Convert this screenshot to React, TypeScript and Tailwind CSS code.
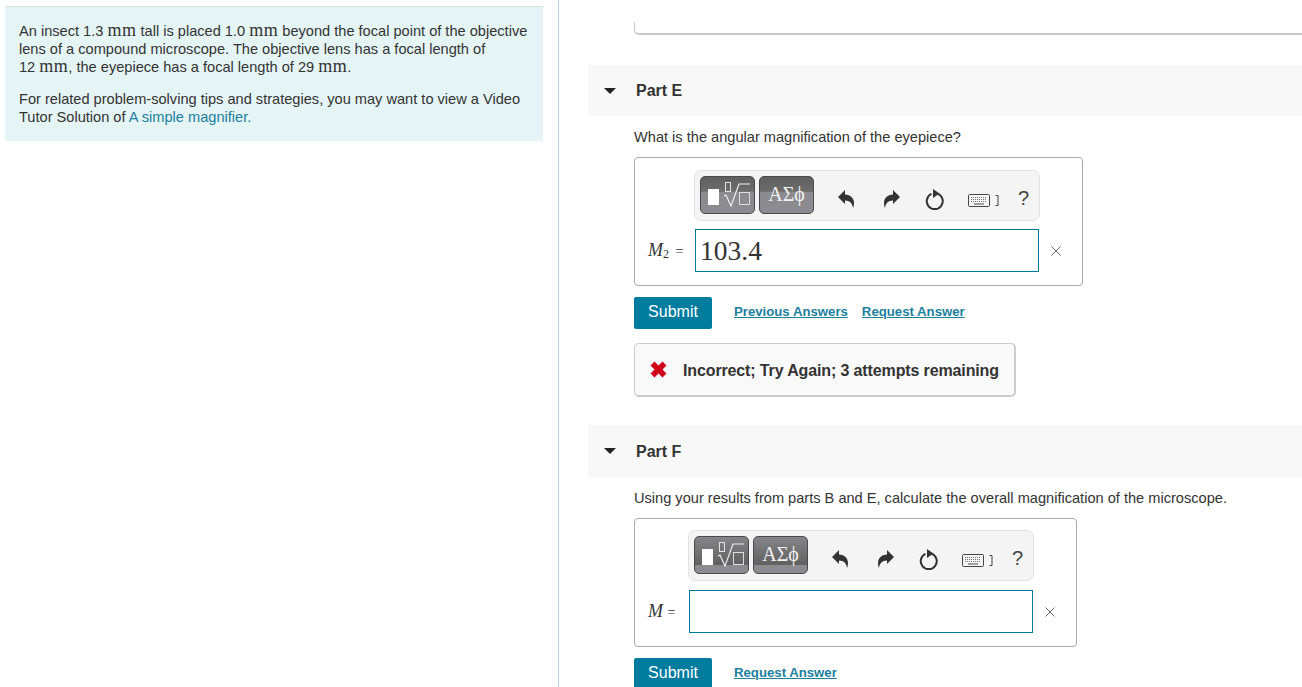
import type { ReactNode } from 'react';

const serif = { fontFamily: '"Liberation Serif", serif' };

function Mm() {
  return <span className="font-['Liberation_Serif',serif] text-[18px] leading-[17px] tracking-[0.5px]">mm</span>;
}

function TemplatesIcon() {
  return (
    <svg width="54" height="38" viewBox="0 0 54 38" fill="none" className="absolute inset-0">
      <rect x="7" y="12" width="11" height="16" fill="#fff" />
      <rect x="24.500" y="5.500" width="5" height="9" stroke="#e4e4e4" strokeWidth="1" />
      <path d="M23 19l2-1 5 11 8-22h11" stroke="#eee" strokeWidth="1.200" />
      <rect x="38.500" y="15.500" width="10" height="12" stroke="#ddd" strokeWidth="1" />
    </svg>
  );
}

function ToolButton({ stripe, children }: { stripe: string; children: ReactNode }) {
  return (
    <div className={`relative w-[55px] h-[38px] rounded-[5px] border border-[#4a4a4a] overflow-hidden ${stripe}`}>
      {children}
    </div>
  );
}

function Toolbar({ className, stripe }: { className: string; stripe: string }) {
  return (
    <div className={`flex items-center h-[51px] w-[346px] rounded-[7px] border border-[#e2e2e2] bg-[#f4f4f4] ${className}`}>
      <div className="flex gap-[4px] ml-[5px] -mt-[2px]">
        <ToolButton stripe={stripe}>
          <TemplatesIcon />
        </ToolButton>
        <ToolButton stripe={stripe}>
          <div className="text-center text-[#f2f2f2] text-[20px] leading-[34px]" style={serif}>ΑΣϕ</div>
        </ToolButton>
      </div>
      <svg width="16" height="18" viewBox="0 0 16 18" className="ml-[24px] mt-[7px]" fill="#333">
        <path d="M0 7 7 0v4.500c5 0 9 3.500 9 8.500 0 2-.5 4-1 5-.5-4.500-3-7.500-8-7.500V14z" />
      </svg>
      <svg width="16" height="18" viewBox="0 0 16 18" className="ml-[30px] mt-[7px]" fill="#333">
        <path d="M16 7 9 0v4.500c-5 0-9 3.500-9 8.500 0 2 .5 4 1 5 .5-4.500 3-7.500 8-7.500V14z" />
      </svg>
      <svg width="20" height="22" viewBox="0 0 20 22" className="ml-[25px] mt-[8px]" fill="none">
        <path d="M13 4.800a8 8 0 1 1-6.500 0" stroke="#333" strokeWidth="2" />
        <path d="M8 0l6.500 4.500L8 9z" fill="#333" />
      </svg>
      <svg width="22" height="13" viewBox="0 0 22 13" className="ml-[23px] mt-[10px]" fill="none">
        <rect x=".5" y=".5" width="21" height="12" rx="1" fill="#f4f4f4" stroke="#444" />
        <path d="M3 3.500h16M3 5.500h16M3 7.500h16" stroke="#777" strokeWidth="1.200" strokeDasharray="1 1" />
        <path d="M6 10h10" stroke="#666" strokeWidth="1.200" />
      </svg>
      <svg width="4" height="11" viewBox="0 0 4 11" className="ml-[5px] mt-[10px]" fill="none">
        <path d="M.5.500h2.500v10H.500" stroke="#444" />
      </svg>
      <span className="ml-[19px] mt-[4px] text-[#444] text-[20px] leading-[24px]">?</span>
    </div>
  );
}

function Answer({
  box,
  toolbar,
  stripe,
  labelWidth,
  label,
  children,
}: {
  box: string;
  toolbar: string;
  stripe: string;
  labelWidth: string;
  label: ReactNode;
  children?: ReactNode;
}) {
  return (
    <div className={`h-[129px] rounded-[4px] border border-[#aaa] ${box}`}>
      <Toolbar className={toolbar} stripe={stripe} />
      <div className="flex items-center">
        <div className={`text-[#333] text-[18px] pl-[13px] whitespace-nowrap ${labelWidth}`} style={serif}>
          {label}
        </div>
        <div className="h-[43px] w-[344px] border border-[#00799a] pl-[4px] text-[#333] text-[27.500px] leading-[41px]" style={serif}>
          {children}
        </div>
        <svg width="10" height="10" viewBox="0 0 10 10" className="ml-[12px]" fill="none">
          <path d="M.5.500l9 9M9.500.500l-9 9" stroke="#666" />
        </svg>
      </div>
    </div>
  );
}

function PartHeader({ name, height, labelClass }: { name: string; height: string; labelClass?: string }) {
  return (
    <div className={`flex items-center bg-[#f8f8f8] pl-[16px] ${height}`}>
      <div className="w-0 h-0 border-x-[6px] border-x-transparent border-t-[6px] border-t-[#222]" />
      <span className={`ml-[20px] text-[16px] font-bold text-[#333] ${labelClass ?? ''}`}>{name}</span>
    </div>
  );
}

function SubmitRow({ links }: { links: string[] }) {
  return (
    <div className="flex items-center">
      <div className="w-[78px] h-[32px] shrink-0 rounded-[2px] bg-[#007c9e] text-white text-[16px] leading-[30px] text-center">
        Submit
      </div>
      <div className="flex gap-[14px] ml-[22px] -mt-[2px]">
        {links.map((l) => (
          <span key={l} className="text-[13.200px] font-bold text-[#1b7f9e] underline">
            {l}
          </span>
        ))}
      </div>
    </div>
  );
}

export default function App() {
  return (
    <div className="flex h-[687px] overflow-hidden bg-white font-['Liberation_Sans',sans-serif] text-[14.600px] text-[#333]">
      <div className="w-[559px] shrink-0 border-r border-[#b9d0e4] pt-[6px] pl-[5px]">
        <div className="w-[538px] h-[135px] bg-[#e5f5f6] border-t border-[#d9e5e9] pt-[15px] pl-[14px] leading-[18px]">
          <p className="w-[515px]">
            An insect 1.3 <Mm /> tall is placed 1.0 <Mm /> beyond the focal point of the objective lens of a compound microscope. The objective lens has a focal length of
            <br />
            12 <Mm />, the eyepiece has a focal length of 29 <Mm />.
          </p>
          <p className="mt-[14px] w-[515px]">
            For related problem-solving tips and strategies, you may want to view a Video Tutor Solution of{' '}
            <span className="text-[#1b7f9e]">A simple magnifier.</span>
          </p>
        </div>
      </div>

      <div className="flex-1 pl-[29px] pt-[22px]">
        <div className="ml-[46px] h-[13px] border-b-2 border-l border-[#c9c9c9] rounded-bl-[5px]" />

        <div className="mt-[30px]">
          <PartHeader name="Part E" height="h-[51px]" />
        </div>
        <div className="pl-[46px]">
          <p className="mt-[12px] leading-[18px]">What is the angular magnification of the eyepiece?</p>
          <Answer
            box="mt-[11px] w-[449px] pt-[12px]"
            toolbar="ml-[59px] mb-[8px]"
            stripe="bg-[linear-gradient(#5f5f5f_0%,#6d6d6d_40%,#8b8b90_41%,#8b8b90_100%)]"
            labelWidth="w-[60px]"
            label={
              <>
                <i>M</i>
                <span className="text-[12px] align-[-2px]">2</span> <span className="ml-[2px] text-[14px]">=</span>
              </>
            }
          >
            103.4
          </Answer>
          <div className="mt-[11px]">
            <SubmitRow links={['Previous Answers', 'Request Answer']} />
          </div>
          <div className="mt-[14px] flex items-center w-[382px] h-[54px] rounded-[5px] border border-[#ccc] border-b-2 border-r-2 bg-[#f9f9f9] pl-[15px]">
            <svg width="17" height="17" viewBox="0 0 17 17" fill="#d0021b">
              <path d="M4.500 .5 8.500 4.500 12.500 .5 16.500 4.500 12.500 8.500 16.500 12.500 12.500 16.500 8.500 12.500 4.500 16.500 .5 12.500 4.500 8.500 .5 4.500z" />
            </svg>
            <span className="ml-[16px] mt-[2px] text-[16px] font-bold text-[#333] tracking-[-0.008em]">Incorrect; Try Again; 3 attempts remaining</span>
          </div>
        </div>

        <div className="mt-[28px]">
          <PartHeader name="Part F" height="h-[52px]" labelClass="mt-[2px]" />
        </div>
        <div className="pl-[46px]">
          <p className="mt-[12px] leading-[18px]">Using your results from parts B and E, calculate the overall magnification of the microscope.</p>
          <Answer
            box="mt-[11px] w-[443px] pt-[11px]"
            toolbar="ml-[53px] mb-[9px]"
            stripe="bg-[linear-gradient(#858589_0%,#606060_78%,#8b8b90_79%,#8b8b90_100%)]"
            labelWidth="w-[54px]"
            label={
              <>
                <i>M</i> <span className="text-[14px]">=</span>
              </>
            }
          />
          <div className="mt-[11px]">
            <SubmitRow links={['Request Answer']} />
          </div>
        </div>
      </div>
    </div>
  );
}
